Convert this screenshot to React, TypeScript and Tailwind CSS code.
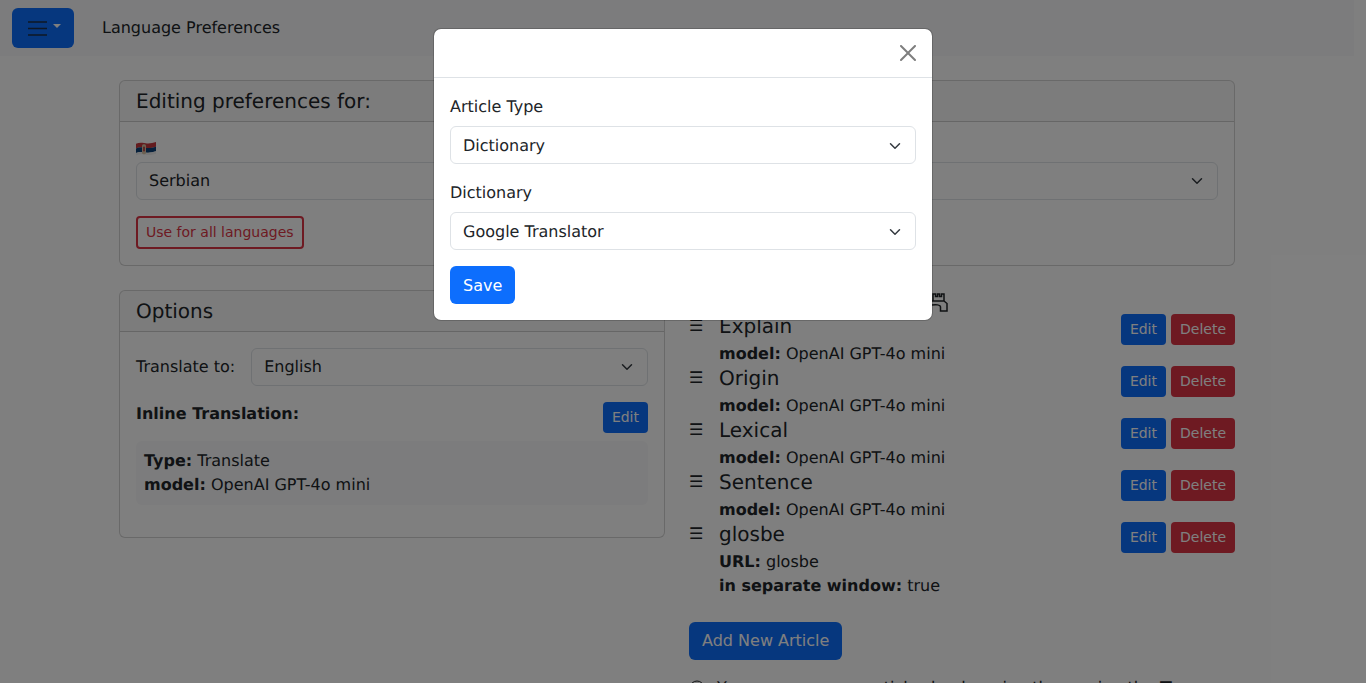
import React from 'react';

const articles = [
    { title: 'Explain', lines: [['model:', 'OpenAI GPT-4o mini']] },
    { title: 'Origin', lines: [['model:', 'OpenAI GPT-4o mini']] },
    { title: 'Lexical', lines: [['model:', 'OpenAI GPT-4o mini']] },
    { title: 'Sentence', lines: [['model:', 'OpenAI GPT-4o mini']] },
    {
        title: 'glosbe',
        lines: [
            ['URL:', 'glosbe'],
            ['in separate window:', 'true'],
        ],
    },
];

const Select = ({ value, className = '' }: { value?: string; className?: string }) => (
    <div
        className={`flex h-[38px] items-center justify-between rounded-md border border-[#dee2e6] bg-white pl-[12px] pr-[12px] text-[#212529] ${className}`}
    >
        <span>{value}</span>
        <svg viewBox="0 0 16 16" className="h-3 w-4" fill="none" stroke="#343a40" strokeWidth="2" strokeLinecap="round" strokeLinejoin="round">
            <path d="m2 5 6 6 6-6" />
        </svg>
    </div>
);

const SmallButton = ({ label, color }: { label: string; color: 'blue' | 'red' }) => (
    <button
        className={`h-[31px] rounded-[4px] px-[9px] pb-[2px] text-sm text-white ${color === 'blue' ? 'bg-[#0d6efd]' : 'bg-[#dc3545]'}`}
    >
        {label}
    </button>
);

const Card = ({ title, children }: { title: string; children: React.ReactNode }) => (
    <div className="rounded-md border border-black/[.175] bg-white">
        <div className="h-[41px] rounded-t-[5px] border-b border-black/[.175] bg-[#212529]/[.03] px-4 py-2 text-xl leading-6">
            {title}
        </div>
        <div className="p-4">{children}</div>
    </div>
);

const SerbianFlag = () => (
    <svg viewBox="0 2 20 12" preserveAspectRatio="none" className="h-[14px] w-5">
        <path d="M0 3.5C4 1.8 8 3 11 3.2c3 .2 6-.4 9-1.2v4c-3 .8-6 1.4-9 1.2C8 7 4 5.8 0 7.5z" fill="#c6363c" />
        <path d="M0 7.5C4 5.8 8 7 11 7.2c3 .2 6-.4 9-1.2v4c-3 .8-6 1.4-9 1.2C8 11 4 9.8 0 11.5z" fill="#0c4076" />
        <path d="M0 11.5C4 9.8 8 11 11 11.2c3 .2 6-.4 9-1.2v2c-3 .8-6 1.4-9 1.2-3-.2-7-1.4-11 .3z" fill="#eeeeee" />
        <rect x="6" y="4" width="4" height="8.5" rx="1.4" fill="#d8c3a5" />
        <rect x="7.2" y="6" width="1.6" height="4" fill="#b03035" />
    </svg>
);

const App = () => {
    return (
        <div className="relative h-[683px] overflow-hidden bg-white font-['DejaVu_Sans',sans-serif] text-base leading-6 text-[#212529] [text-rendering:geometricPrecision]">
            <div className="w-[1354px]">
                <nav className="flex h-14 items-center bg-[#f8f9fa] pl-3">
                    <button className="flex h-10 w-[62px] items-center rounded-md bg-[#0d6efd] pl-[13px]">
                        <svg viewBox="0 0 24 24" className="h-6 w-6" fill="none" stroke="#212529" strokeOpacity=".85" strokeWidth="1.6">
                            <path d="M3 6h19M3 12.5h19M3 19h19" />
                        </svg>
                        <span className="mb-1 ml-1 h-0 w-0 border-x-[4.8px] border-t-[4.8px] border-x-transparent border-t-white" />
                    </button>
                    <div className="ml-7 mb-px">Language Preferences</div>
                </nav>

                <main className="mx-auto mt-6 w-[1116px]">
                    <Card title="Editing preferences for:">
                        <div className="grid grid-cols-2 gap-x-6">
                            <div>
                                <div className="h-6 pt-1">
                                    <SerbianFlag />
                                </div>
                                <Select value="Serbian" />
                            </div>
                            <div className="pt-6">
                                <Select />
                            </div>
                        </div>
                        <button className="mt-4 block h-[33px] rounded-[4px] border-2 border-[#dc3545] px-2 pb-[2px] text-sm text-[#dc3545]">
                            Use for all languages
                        </button>
                    </Card>

                    <div className="mt-6 grid grid-cols-2 items-start gap-x-6">
                        <Card title="Options">
                            <div className="flex items-center gap-4">
                                <span>Translate to:</span>
                                <Select value="English" className="flex-1" />
                            </div>
                            <div className="mt-4 flex items-start justify-between">
                                <b className="font-bold">Inline Translation:</b>
                                <SmallButton label="Edit" color="blue" />
                            </div>
                            <div className="mt-2 mb-4 rounded-md bg-[#f8f9fa] p-2">
                                <div>
                                    <b>Type:</b> Translate
                                </div>
                                <div>
                                    <b>model:</b> OpenAI GPT-4o mini
                                </div>
                            </div>
                        </Card>

                        <div>
                            <div className="flex h-6 items-center pl-[239px]">
                                <svg viewBox="0 0 20 20" className="h-5 w-5" fill="none" stroke="#212529" strokeWidth="1.5">
                                    <path d="M5 9V2h2.5v2.5h2V2h2v2.5h2V2H16v7M3 9h13M16 9l3 2.5V19h-6.5v-4c0-2.5-5-2.5-8.5-2" />
                                </svg>
                            </div>
                            {articles.map((article) => (
                                <div key={article.title} className="flex">
                                    <div className="w-[30px]">☰</div>
                                    <div className="flex-1">
                                        <div className="mb-1 text-xl leading-6">{article.title}</div>
                                        {article.lines.map(([name, value]) => (
                                            <div key={name}>
                                                <b>{name}</b> {value}
                                            </div>
                                        ))}
                                    </div>
                                    <div className="flex items-start gap-[5px]">
                                        <SmallButton label="Edit" color="blue" />
                                        <SmallButton label="Delete" color="red" />
                                    </div>
                                </div>
                            ))}
                            <button className="mt-6 block h-[38px] rounded-md bg-[#0d6efd] px-[13px] text-white">
                                Add New Article
                            </button>
                            <div className="mt-4 flex items-start gap-3">
                                <svg viewBox="0 0 16 16" className="mt-1 h-4 w-4" fill="none" stroke="#212529">
                                    <circle cx="8" cy="8" r="7" />
                                </svg>
                                <span>You can rearrange articles by dragging them using the ☰</span>
                            </div>
                        </div>
                    </div>
                </main>
            </div>

            <div className="absolute inset-0 flex justify-center bg-black/50 pt-7">
                <div className="h-fit w-[500px] rounded-lg border border-black/[.175] bg-white bg-clip-padding">
                    <div className="flex h-[49px] items-center justify-end border-b border-[#dee2e6] pr-4">
                        <svg viewBox="0 0 16 16" className="mb-[1px] h-4 w-4 opacity-50">
                            <path d="M.293.293a1 1 0 0 1 1.414 0L8 6.586 14.293.293a1 1 0 1 1 1.414 1.414L9.414 8l6.293 6.293a1 1 0 0 1-1.414 1.414L8 9.414l-6.293 6.293a1 1 0 0 1-1.414-1.414L6.586 8 .293 1.707a1 1 0 0 1 0-1.414" />
                        </svg>
                    </div>
                    <div className="p-4">
                        <label className="mb-[7px] block pt-px">Article Type</label>
                        <Select value="Dictionary" className="mb-4 pt-[2px]" />
                        <label className="mb-[7px] block pt-px">Dictionary</label>
                        <Select value="Google Translator" className="mb-4 pt-[2px]" />
                        <button className="block h-[38px] rounded-md bg-[#0d6efd] px-[13px] pt-[2px] text-white">Save</button>
                    </div>
                </div>
            </div>
        </div>
    );
};

export default App;
